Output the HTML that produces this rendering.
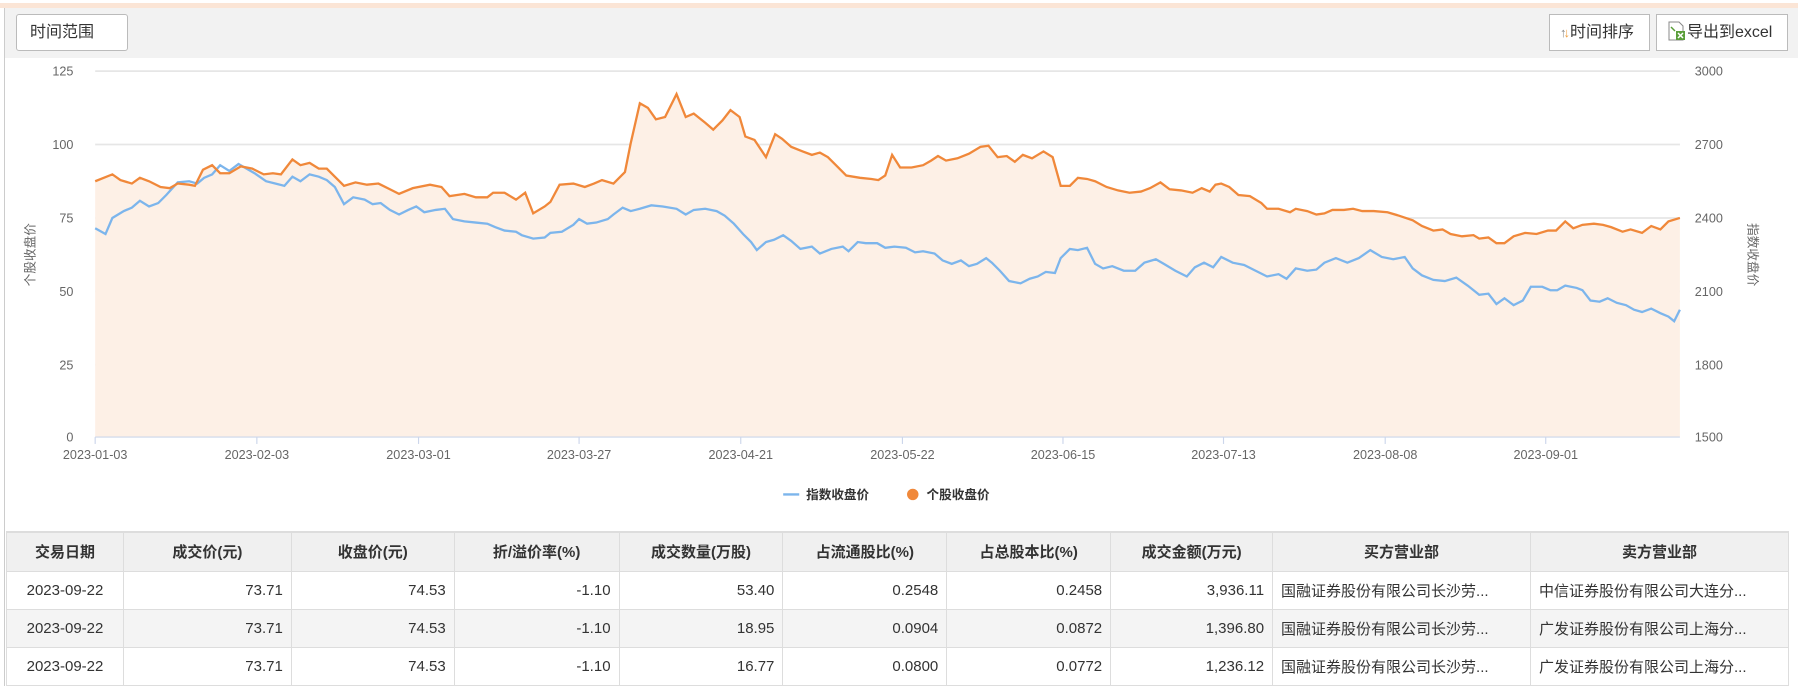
<!DOCTYPE html>
<html><head><meta charset="utf-8"><style>
*{margin:0;padding:0;box-sizing:border-box}
body{width:1798px;height:686px;overflow:hidden;background:#fff;font-family:"Liberation Sans","Noto Sans CJK SC",sans-serif;position:relative}
.stripe{position:absolute;left:0;top:3px;width:1798px;height:5px;background:#fbe5d6}
.bar{position:absolute;left:5px;top:8px;width:1793px;height:50px;background:#f2f2f2}
.lb{position:absolute;left:4px;top:8px;width:1px;height:678px;background:#ccc}
.btn{position:absolute;top:14px;height:37px;background:#fff;border:1px solid #bbb;font-size:16px;color:#333;line-height:35px;white-space:nowrap}
svg.ch{position:absolute;left:0;top:0}
table{position:absolute;left:6px;top:531px;width:1783px;border-collapse:collapse;font-size:15px;color:#333}
th{background:#f0f0f0;height:39px;font-weight:bold;border:1px solid #ddd;border-top:2px solid #ddd}
td{height:38px;border:1px solid #ddd;padding:0 8px;white-space:nowrap;overflow:hidden}
tr:nth-child(odd) td{background:#f4f4f4}
.r{text-align:right}.c{text-align:center}
</style></head><body>
<div class="stripe"></div><div class="bar"></div><div class="lb"></div>
<div class="btn" style="left:16px;width:112px;border-radius:3px;padding-left:13px">时间范围</div>
<div class="btn" style="left:1549px;width:101px;padding-left:10px"><span style="color:#888;font-size:13px">↑</span><span style="color:#f0a040;font-size:13px;margin-left:-3px">↓</span>时间排序</div>
<div class="btn" style="left:1656px;width:132px;padding-left:10px"><svg width="20" height="20" style="vertical-align:-4px"><path d="M2 1h10l4 4v14H2z" fill="#fff" stroke="#888"/><rect x="9" y="10" width="9" height="9" fill="#5a9e3a"/><path d="M11 12l5 5M16 12l-5 5" stroke="#fff" stroke-width="1.5"/><path d="M4 6l4 4" stroke="#5a9e3a" stroke-width="1.5"/></svg>导出到excel</div>
<svg class="ch" width="1798" height="686" viewBox="0 0 1568 598" preserveAspectRatio="none" font-family="Liberation Sans, Noto Sans CJK SC, sans-serif" font-size="11" fill="#666">
<g stroke="#e6e6e6" stroke-width="1.5"><line x1="83" x2="1465" y1="62" y2="62"/><line x1="83" x2="1465" y1="126" y2="126"/><line x1="83" x2="1465" y1="190" y2="190"/><line x1="83" x2="1465" y1="254" y2="254"/><line x1="83" x2="1465" y1="318" y2="318"/></g>
<polygon fill="#fdf0e6" points="83,381 83,158 98,152 105,157 115,160 122,155 130,158 140,163 148,164 155,160 165,161 170,162 177,148 185,144 192,151 200,151 210,145 220,147 230,152 238,151 245,152 255,139 262,144 270,142 278,147 285,147 292,154 300,162 310,159 320,161 330,160 340,165 348,169 360,164 375,161 385,163 392,171 405,169 415,172 425,172 430,168 440,168 450,174 458,168 465,186 475,180 480,176 488,161 500,160 510,163 518,160 525,157 535,160 545,150 550,125 558,90 565,94 572,104 580,102 590,82 598,102 605,99 615,107 622,113 630,105 637,96 645,102 650,119 658,122 668,137 676,117 682,121 690,128 700,132 708,135 715,133 722,137 730,145 738,153 750,155 760,156 766,157 772,153 778,135 785,146 795,146 805,144 812,140 818,136 825,140 835,138 845,134 855,128 862,127 870,137 878,136 885,141 892,135 900,138 910,132 918,137 925,162 933,162 940,155 948,156 955,158 965,163 975,166 985,168 995,167 1003,164 1012,159 1020,165 1030,166 1040,168 1048,164 1055,167 1060,161 1065,160 1072,163 1080,170 1090,171 1100,177 1105,182 1115,182 1125,185 1130,182 1140,184 1148,187 1155,186 1162,183 1172,183 1180,182 1188,184 1198,184 1210,185 1220,188 1232,192 1240,197 1250,201 1258,200 1265,204 1275,206 1285,205 1290,208 1298,207 1305,212 1312,212 1320,206 1330,203 1340,204 1350,201 1357,201 1365,193 1372,199 1380,196 1390,195 1398,196 1405,198 1415,202 1422,200 1432,203 1440,197 1448,200 1455,193 1465,190 1465,381"/>
<line x1="83" x2="1465" y1="381" y2="381" stroke="#ccd6eb"/>
<g stroke="#ccd6eb"><line x1="83" x2="83" y1="381" y2="387"/><line x1="224" x2="224" y1="381" y2="387"/><line x1="365" x2="365" y1="381" y2="387"/><line x1="505" x2="505" y1="381" y2="387"/><line x1="646" x2="646" y1="381" y2="387"/><line x1="787" x2="787" y1="381" y2="387"/><line x1="927" x2="927" y1="381" y2="387"/><line x1="1067" x2="1067" y1="381" y2="387"/><line x1="1208" x2="1208" y1="381" y2="387"/><line x1="1348" x2="1348" y1="381" y2="387"/></g>
<polyline fill="none" stroke="#7cb5ec" stroke-width="2" points="83,199 92,204 98,190 108,184 115,181 122,175 130,180 138,177 145,170 155,159 165,158 172,160 178,155 185,152 192,144 200,149 208,143 215,147 222,151 232,158 240,160 248,162 255,154 262,158 270,152 278,154 285,157 292,163 300,178 308,172 318,174 325,178 332,177 340,183 348,187 356,183 363,180 370,185 380,183 388,182 395,191 405,193 415,194 425,195 432,198 440,201 450,202 455,205 465,208 475,207 480,203 490,202 500,196 505,191 512,195 520,194 530,191 535,187 543,181 550,184 558,182 568,179 578,180 590,182 598,187 605,183 615,182 625,184 632,188 640,195 648,204 655,211 660,218 668,211 675,209 683,205 690,210 698,217 708,215 715,221 725,217 735,215 740,219 748,211 755,212 765,212 772,216 780,215 790,216 798,220 805,219 815,221 822,227 830,230 838,227 845,232 852,230 860,225 865,229 872,236 880,245 890,247 898,243 905,241 912,237 920,238 925,225 933,217 940,218 948,216 955,230 962,234 970,232 980,236 990,236 998,229 1008,226 1015,230 1025,236 1035,241 1042,233 1050,229 1058,233 1065,224 1075,229 1085,231 1095,236 1105,241 1115,239 1122,243 1130,234 1140,236 1148,235 1155,229 1165,225 1175,229 1185,225 1195,218 1205,224 1215,226 1225,224 1232,234 1240,240 1250,244 1260,245 1270,242 1280,249 1290,257 1298,256 1305,265 1312,260 1320,266 1328,262 1335,250 1345,250 1352,253 1358,253 1365,249 1375,251 1380,253 1387,262 1395,263 1402,260 1410,264 1418,266 1425,270 1432,272 1440,269 1448,273 1455,276 1460,280 1465,270"/>
<polyline fill="none" stroke="#f0883a" stroke-width="2" points="83,158 98,152 105,157 115,160 122,155 130,158 140,163 148,164 155,160 165,161 170,162 177,148 185,144 192,151 200,151 210,145 220,147 230,152 238,151 245,152 255,139 262,144 270,142 278,147 285,147 292,154 300,162 310,159 320,161 330,160 340,165 348,169 360,164 375,161 385,163 392,171 405,169 415,172 425,172 430,168 440,168 450,174 458,168 465,186 475,180 480,176 488,161 500,160 510,163 518,160 525,157 535,160 545,150 550,125 558,90 565,94 572,104 580,102 590,82 598,102 605,99 615,107 622,113 630,105 637,96 645,102 650,119 658,122 668,137 676,117 682,121 690,128 700,132 708,135 715,133 722,137 730,145 738,153 750,155 760,156 766,157 772,153 778,135 785,146 795,146 805,144 812,140 818,136 825,140 835,138 845,134 855,128 862,127 870,137 878,136 885,141 892,135 900,138 910,132 918,137 925,162 933,162 940,155 948,156 955,158 965,163 975,166 985,168 995,167 1003,164 1012,159 1020,165 1030,166 1040,168 1048,164 1055,167 1060,161 1065,160 1072,163 1080,170 1090,171 1100,177 1105,182 1115,182 1125,185 1130,182 1140,184 1148,187 1155,186 1162,183 1172,183 1180,182 1188,184 1198,184 1210,185 1220,188 1232,192 1240,197 1250,201 1258,200 1265,204 1275,206 1285,205 1290,208 1298,207 1305,212 1312,212 1320,206 1330,203 1340,204 1350,201 1357,201 1365,193 1372,199 1380,196 1390,195 1398,196 1405,198 1415,202 1422,200 1432,203 1440,197 1448,200 1455,193 1465,190"/>
<g text-anchor="end"><text x="64" y="66">125</text><text x="64" y="130">100</text><text x="64" y="194">75</text><text x="64" y="258">50</text><text x="64" y="322">25</text><text x="64" y="385">0</text></g>
<g><text x="1478" y="66">3000</text><text x="1478" y="130">2700</text><text x="1478" y="194">2400</text><text x="1478" y="258">2100</text><text x="1478" y="322">1800</text><text x="1478" y="385">1500</text></g>
<g text-anchor="middle"><text x="83" y="400">2023-01-03</text><text x="224" y="400">2023-02-03</text><text x="365" y="400">2023-03-01</text><text x="505" y="400">2023-03-27</text><text x="646" y="400">2023-04-21</text><text x="787" y="400">2023-05-22</text><text x="927" y="400">2023-06-15</text><text x="1067" y="400">2023-07-13</text><text x="1208" y="400">2023-08-08</text><text x="1348" y="400">2023-09-01</text></g>
<text transform="translate(30,222) rotate(-90)" text-anchor="middle">个股收盘价</text>
<text transform="translate(1525,222) rotate(90)" text-anchor="middle">指数收盘价</text>
<line x1="683" x2="697" y1="431" y2="431" stroke="#7cb5ec" stroke-width="2"/>
<text x="703" y="435" fill="#333" font-weight="bold">指数收盘价</text>
<circle cx="796" cy="431" r="5" fill="#f0883a"/>
<text x="808" y="435" fill="#333" font-weight="bold">个股收盘价</text>
</svg>
<table>
<colgroup><col style="width:117px"><col style="width:168px"><col style="width:163px"><col style="width:165px"><col style="width:164px"><col style="width:164px"><col style="width:164px"><col style="width:162px"><col style="width:258px"><col style="width:258px"></colgroup>
<tr><th>交易日期</th><th>成交价(元)</th><th>收盘价(元)</th><th>折/溢价率(%)</th><th>成交数量(万股)</th><th>占流通股比(%)</th><th>占总股本比(%)</th><th>成交金额(万元)</th><th>买方营业部</th><th>卖方营业部</th></tr>
<tr><td class="c">2023-09-22</td><td class="r">73.71</td><td class="r">74.53</td><td class="r">-1.10</td><td class="r">53.40</td><td class="r">0.2548</td><td class="r">0.2458</td><td class="r">3,936.11</td><td>国融证券股份有限公司长沙劳...</td><td>中信证券股份有限公司大连分...</td></tr>
<tr><td class="c">2023-09-22</td><td class="r">73.71</td><td class="r">74.53</td><td class="r">-1.10</td><td class="r">18.95</td><td class="r">0.0904</td><td class="r">0.0872</td><td class="r">1,396.80</td><td>国融证券股份有限公司长沙劳...</td><td>广发证券股份有限公司上海分...</td></tr>
<tr><td class="c">2023-09-22</td><td class="r">73.71</td><td class="r">74.53</td><td class="r">-1.10</td><td class="r">16.77</td><td class="r">0.0800</td><td class="r">0.0772</td><td class="r">1,236.12</td><td>国融证券股份有限公司长沙劳...</td><td>广发证券股份有限公司上海分...</td></tr>
</table>
</body></html>
